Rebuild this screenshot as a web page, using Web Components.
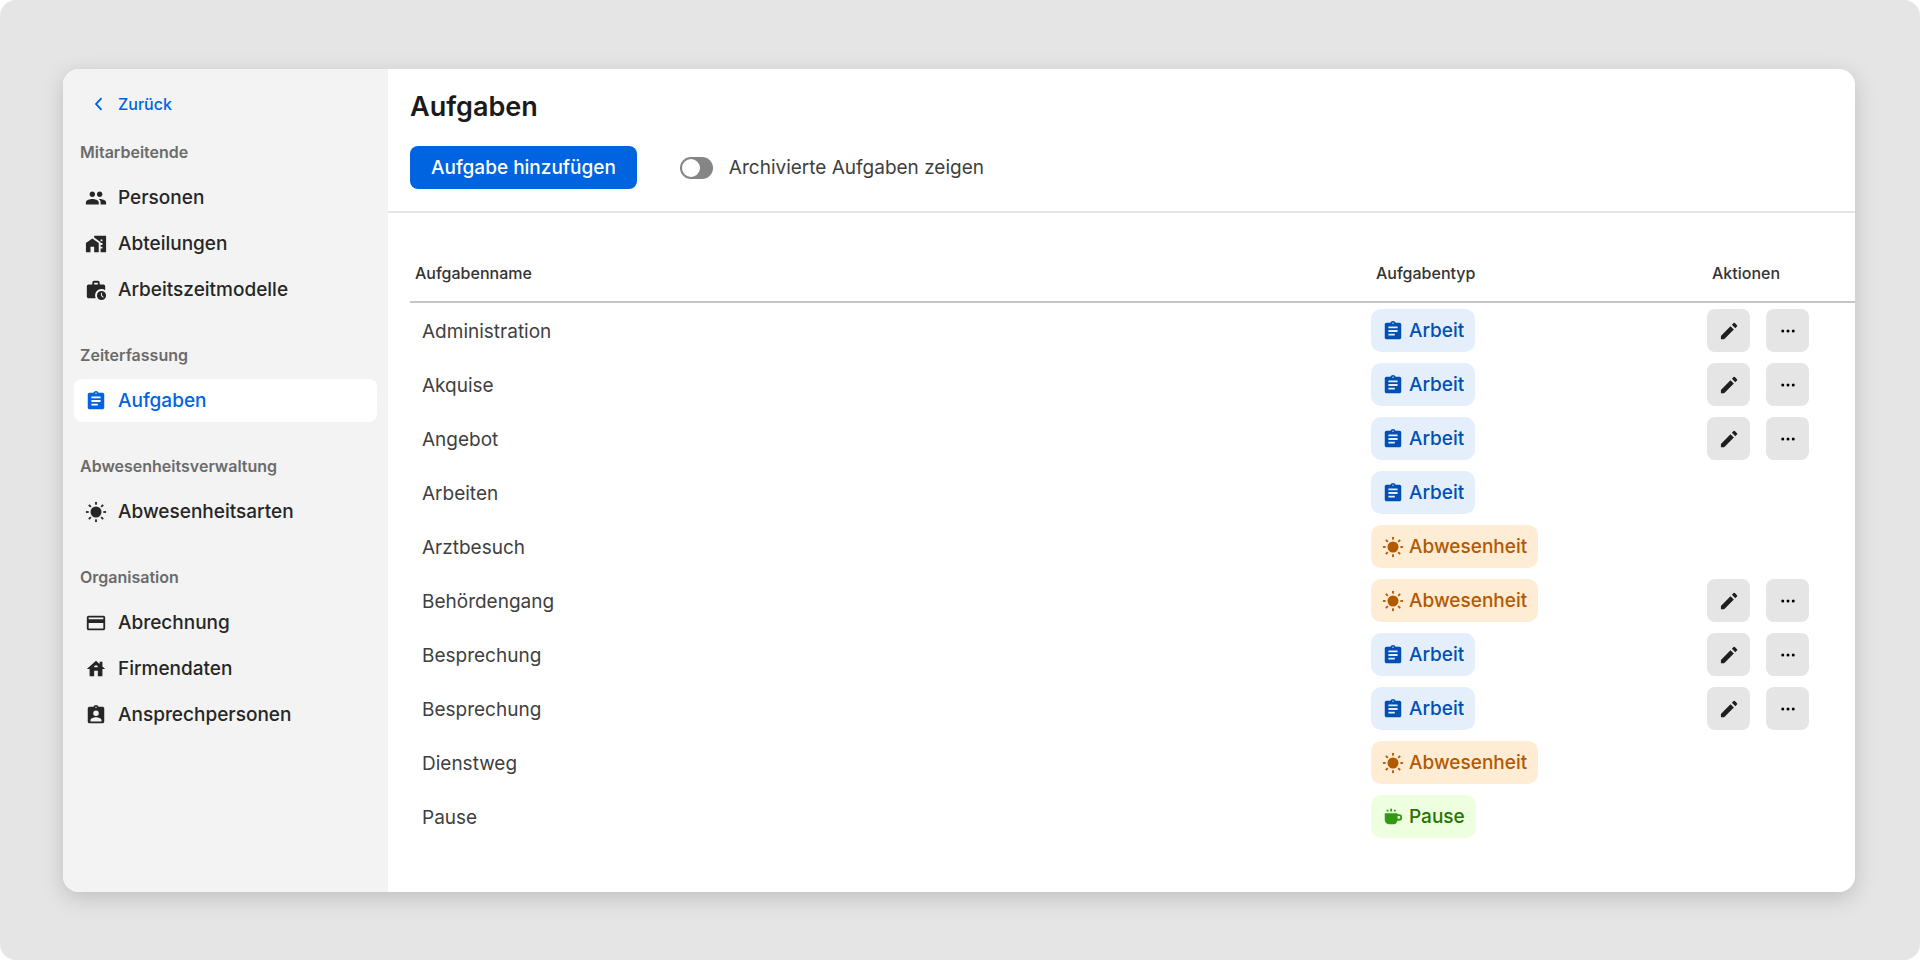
<!DOCTYPE html>
<html lang="de">
<head>
<meta charset="utf-8">
<meta name="viewport" content="width=device-width, initial-scale=1">
<title>Aufgaben</title>
<style>
  html { background: #fff; }
  body { margin: 0; font-family: Inter, "Open Sans", sans-serif; color: #262626; }
</style>
</head>
<body>
<app-window>
  <side-nav slot="nav">
    <nav-section label="Mitarbeitende">
      <nav-item icon="people">Personen</nav-item>
      <nav-item icon="homework">Abteilungen</nav-item>
      <nav-item icon="workhistory">Arbeitszeitmodelle</nav-item>
    </nav-section>
    <nav-section label="Zeiterfassung">
      <nav-item icon="clipboard" active>Aufgaben</nav-item>
    </nav-section>
    <nav-section label="Abwesenheitsverwaltung">
      <nav-item icon="sun">Abwesenheitsarten</nav-item>
    </nav-section>
    <nav-section label="Organisation">
      <nav-item icon="card">Abrechnung</nav-item>
      <nav-item icon="house">Firmendaten</nav-item>
      <nav-item icon="badge">Ansprechpersonen</nav-item>
    </nav-section>
  </side-nav>
  <page-header>
    <span slot="title">Aufgaben</span>
    <primary-button>Aufgabe hinzufügen</primary-button>
    <toggle-switch>Archivierte Aufgaben zeigen</toggle-switch>
  </page-header>
  <task-table></task-table>
</app-window>

<script>
const ICONS = {
  back: '<path d="M18 5.700 12 12l6 6.300" fill="none" stroke="currentColor" stroke-width="2"/>',
  people: '<path d="M16 11c1.66 0 2.99-1.34 2.99-3S17.66 5 16 5s-3 1.34-3 3 1.34 3 3 3zm-8 0c1.66 0 2.99-1.34 2.99-3S9.66 5 8 5 5 6.34 5 8s1.34 3 3 3zm0 2c-2.33 0-7 1.17-7 3.5V19h14v-2.500C15 14.17 10.330 13 8 13zm8 0c-.29 0-.62.02-.97.05 1.160.84 1.970 1.970 1.970 3.450V19h6v-2.500c0-2.330-4.670-3.500-7-3.500z"/>',
  homework: '<path fill-rule="evenodd" d="M1 11v10h5v-6h4v6h5V11L8 6zM10 3v1.970l7 5V11h2v2h-2v2h2v2h-2v4h6V3zm9 6h-2V7h2z"/>',
  workhistory: '<path fill-rule="evenodd" d="M18 11c1.490 0 2.870.47 4 1.260V8c0-1.110-.890-2-2-2h-4V4c0-1.110-.890-2-2-2h-4c-1.110 0-2 .890-2 2v2H4c-1.110 0-1.990.890-1.990 2L2 19c0 1.110.890 2 2 2h7.680A6.950 6.950 0 0 1 18 11zm-8-7h4v2h-4zM18 13a5 5 0 1 0 0 10 5 5 0 0 0 0-10zm1.650 7.350L17.500 18.200V15h1v2.790l1.850 1.850z"/>',
  clipboard: '<path fill-rule="evenodd" d="M19 3h-4.180C14.400 1.840 13.300 1 12 1s-2.400.840-2.820 2H5c-1.100 0-2 .9-2 2v14c0 1.100.9 2 2 2h14c1.100 0 2-.9 2-2V5c0-1.100-.9-2-2-2zm-7-.250a.75.75 0 1 1 0 1.500.75.75 0 0 1 0-1.500zM14 17H7v-2h7zm3-4H7v-2h10zm0-4H7V7h10z"/>',
  sun: '<circle cx="12" cy="12" r="6"/><g><rect x="11" y="1" width="2" height="3"/><rect x="11" y="20" width="2" height="3"/><rect x="1" y="11" width="3" height="2"/><rect x="20" y="11" width="3" height="2"/><path d="m4.930 3.510 2.120 2.120-1.420 1.420-2.120-2.120zM19.070 3.510l1.420 1.420-2.120 2.120-1.420-1.420zM5.630 16.950l1.420 1.420-2.120 2.120-1.420-1.420zM18.370 16.950l2.120 2.120-1.420 1.420-2.120-2.120z"/></g>',
  card: '<path fill-rule="evenodd" d="M20 4H4c-1.110 0-1.990.890-1.990 2L2 18c0 1.110.890 2 2 2h16c1.110 0 2-.890 2-2V6c0-1.110-.890-2-2-2zm0 14H4v-6h16zm0-10H4V6h16z"/>',
  house: '<path fill-rule="evenodd" d="M19 9.300V4h-3v2.600L12 3 2 12h3v8h5v-6h4v6h5v-8h3zM10 10c0-1.100.9-2 2-2s2 .9 2 2z"/>',
  badge: '<path fill-rule="evenodd" d="M19 3h-4.180C14.400 1.840 13.300 1 12 1s-2.400.840-2.820 2H5c-1.100 0-2 .9-2 2v14c0 1.100.9 2 2 2h14c1.100 0 2-.9 2-2V5c0-1.100-.9-2-2-2zm-7-.250a.75.75 0 1 1 0 1.500.75.75 0 0 1 0-1.500zM12 7a3 3 0 1 1 0 6 3 3 0 0 1 0-6zm6 12H6v-1.400c0-2 4-3.100 6-3.100s6 1.100 6 3.100z"/>',
  cup: '<path fill-rule="evenodd" d="M3 8h14v1h1.500a3.500 3.500 0 0 1 0 7h-1.700a5 5 0 0 1-4.800 4H8a5 5 0 0 1-5-5zm14 3v3h1.500a1.500 1.500 0 0 0 0-3zM5 4h2v2H5zM9 3h2v3H9zM13 4h2v2h-2z"/>',
  pencil: '<path d="M3.200 17.500V21h3.500L17.300 10.400l-3.700-3.700zM20.700 7.100a1 1 0 0 0 0-1.400l-2.300-2.300a1 1 0 0 0-1.400 0L15.200 5.200l3.700 3.700z"/>',
  dots: '<circle cx="5" cy="12" r="2"/><circle cx="12" cy="12" r="2"/><circle cx="19" cy="12" r="2"/>'
};

class BaseElement extends HTMLElement {
  render(html) {
    this.attachShadow({ mode: 'open' }).innerHTML = html;
  }
}

customElements.define('app-icon', class extends BaseElement {
  connectedCallback() {
    if (this.shadowRoot) return;
    this.render(`<style>
      :host { display: block; flex: none; width: 22px; height: 22px; }
      svg { display: block; width: 100%; height: 100%; fill: currentColor; }
    </style><svg viewBox="0 0 24 24" aria-hidden="true">${ICONS[this.getAttribute('name')]}</svg>`);
  }
});

customElements.define('app-window', class extends BaseElement {
  connectedCallback() {
    this.render(`<style>
      :host { display: flex; box-sizing: border-box; min-height: 100vh; padding: 69px 65px 68px 63px;
        background: #e5e5e5; border-radius: 16px; }
      .card { display: flex; flex: 1; min-width: 0; overflow: hidden; background: #fff; border-radius: 16px; }
      .frame { display: flex; flex: 1; min-width: 0; border-radius: 16px;
        box-shadow: 0 6px 22px rgba(0, 0, 0, .17); }
      main { flex: 1; min-width: 0; }
    </style>
    <div class="frame"><div class="card"><slot name="nav"></slot><main><slot></slot></main></div></div>`);
  }
});

customElements.define('side-nav', class extends BaseElement {
  connectedCallback() {
    this.render(`<style>
      :host { display: block; box-sizing: border-box; flex: none; width: 325px; padding: 13px 11px; background: #f3f3f3; }
      .back { display: flex; align-items: center; gap: 11px; height: 43px; padding: 0 11px; margin-bottom: 17px;
        color: #0064e0; font-size: 16px; font-weight: 500; text-decoration: none; }
      nav { display: flex; flex-direction: column; gap: 34px; }
    </style>
    <a class="back" href="#"><app-icon name="back"></app-icon>Zurück</a>
    <nav><slot></slot></nav>`);
  }
});

customElements.define('nav-section', class extends BaseElement {
  connectedCallback() {
    this.render(`<style>
      :host { display: block; }
      h2 { margin: 0 0 14px; padding-left: 6px; color: #6b6b6b; font-size: 16px; line-height: 20px; font-weight: 600; }
      .items { display: flex; flex-direction: column; gap: 3px; }
    </style>
    <h2>${this.getAttribute('label')}</h2>
    <div class="items"><slot></slot></div>`);
  }
});

customElements.define('nav-item', class extends BaseElement {
  connectedCallback() {
    this.render(`<style>
      :host { display: block; }
      a { display: flex; align-items: center; gap: 11px; height: 43px; padding: 0 11px; border-radius: 8px;
        color: #262626; font-size: 19px; font-weight: 500; text-decoration: none; }
      :host([active]) a { background: #fff; color: #0064e0; }
    </style>
    <a href="#"><app-icon name="${this.getAttribute('icon')}"></app-icon><span><slot></slot></span></a>`);
  }
});

customElements.define('page-header', class extends BaseElement {
  connectedCallback() {
    this.render(`<style>
      :host { display: block; padding: 22px 22px 22px; border-bottom: 2px solid #e5e5e5; }
      h1 { margin: 0 0 23px; font-size: 27px; line-height: 32px; font-weight: 600; color: #1a1a1a; }
      .actions { display: flex; align-items: center; gap: 43px; }
    </style>
    <h1><slot name="title"></slot></h1>
    <div class="actions"><slot></slot></div>`);
  }
});

customElements.define('primary-button', class extends BaseElement {
  connectedCallback() {
    this.render(`<style>
      :host { display: block; }
      button { height: 43px; padding: 0 21px; border: 0; border-radius: 8px; background: #0064e0; color: #fff;
        font-family: inherit; font-size: 19px; font-weight: 500; white-space: nowrap; }
    </style><button type="button"><slot></slot></button>`);
  }
});

customElements.define('toggle-switch', class extends BaseElement {
  connectedCallback() {
    this.render(`<style>
      :host { display: block; }
      label { display: flex; align-items: center; gap: 16px; color: #404040; font-size: 19px; }
      input { appearance: none; box-sizing: border-box; display: flex; width: 33px; height: 22px; margin: 0; padding: 2px;
        border-radius: 11px; background: #858585; }
      input::before { content: ""; width: 18px; height: 18px; border-radius: 50%; background: #fff; }
      input:checked { justify-content: flex-end; background: #0064e0; }
    </style><label><input type="checkbox" role="switch"><span><slot></slot></span></label>`);
  }
});

customElements.define('type-tag', class extends BaseElement {
  connectedCallback() {
    const [icon, text] = {
      arbeit: ['clipboard', 'Arbeit'],
      abwesenheit: ['sun', 'Abwesenheit'],
      pause: ['cup', 'Pause']
    }[this.getAttribute('type')];
    this.render(`<style>
      :host { display: flex; width: max-content; align-items: center; gap: 5px; box-sizing: border-box; height: 43px;
        padding: 0 11px; border-radius: 10px; font-size: 19px; font-weight: 500; }
      :host([type="arbeit"]) { background: #e5effc; color: #0050b4; }
      :host([type="abwesenheit"]) { background: #ffecd4; color: #b35900; }
      :host([type="pause"]) { background: #eeffe0; color: #267300; }
      :host([type="pause"]) app-icon { color: #339910; }
    </style><app-icon name="${icon}"></app-icon><span>${text}</span>`);
  }
});

customElements.define('icon-button', class extends BaseElement {
  connectedCallback() {
    this.render(`<style>
      :host { display: block; }
      button { display: flex; align-items: center; justify-content: center; width: 43px; height: 43px; padding: 0;
        border: 0; border-radius: 8px; background: #e5e5e5; color: #1f1f1f; }
      :host([icon="dots"]) app-icon { width: 18px; height: 18px; color: #000; }
    </style><button type="button" aria-label="${this.getAttribute('label')}"><app-icon name="${this.getAttribute('icon')}"></app-icon></button>`);
  }
});

const TASKS = [
  ['Administration', 'arbeit', true],
  ['Akquise', 'arbeit', true],
  ['Angebot', 'arbeit', true],
  ['Arbeiten', 'arbeit', false],
  ['Arztbesuch', 'abwesenheit', false],
  ['Behördengang', 'abwesenheit', true],
  ['Besprechung', 'arbeit', true],
  ['Besprechung', 'arbeit', true],
  ['Dienstweg', 'abwesenheit', false],
  ['Pause', 'pause', false]
];

customElements.define('task-table', class extends BaseElement {
  connectedCallback() {
    const rows = TASKS.map(([name, type, editable]) => `<tr>
      <td class="name">${name}</td>
      <td><type-tag type="${type}"></type-tag></td>
      <td>${editable ? `<div class="actions">
        <icon-button icon="pencil" label="Bearbeiten"></icon-button>
        <icon-button icon="dots" label="Mehr"></icon-button></div>` : ''}</td>
    </tr>`).join('');
    this.render(`<style>
      :host { display: block; padding: 31px 0 44px 22px; }
      table { width: 100%; border-collapse: separate; border-spacing: 0 1px; table-layout: fixed; }
      th, td { box-sizing: border-box; }
      .type { width: 336px; }
      .act { width: 148px; }
      th { height: 58px; padding: 0 5px; border-bottom: 2px solid #c6c6c6; font-size: 16px; font-weight: 500;
        text-align: left; color: #333; }
      td { height: 53px; padding: 0; }
      .name { padding: 2px 12px 0; font-size: 19px; color: #404040; }
      .actions { display: flex; gap: 16px; }
    </style>
    <table>
      <thead><tr><th scope="col">Aufgabenname</th><th scope="col" class="type">Aufgabentyp</th><th scope="col" class="act">Aktionen</th></tr></thead>
      <tbody>${rows}</tbody>
    </table>`);
  }
});
</script>
</body>
</html>
